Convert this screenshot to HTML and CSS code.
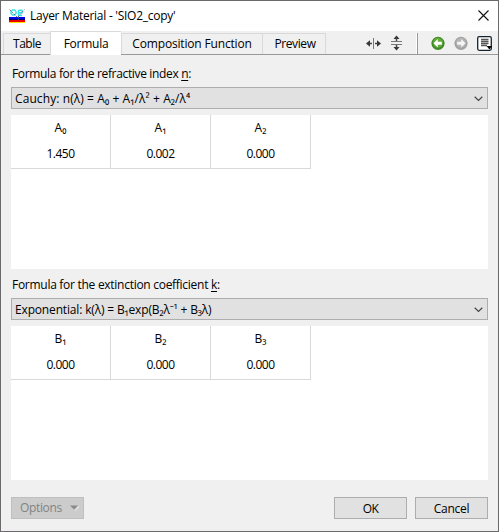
FILE: index.html
```html
<!DOCTYPE html>
<html lang="en">
<head>
<meta charset="utf-8">
<title>Layer Material</title>
<link rel="stylesheet" href="styles.css">
</head>
<body>
<div class="window">
  <header class="titlebar">
    <svg class="logo" width="16" height="16" viewBox="0 0 16 16" shape-rendering="crispEdges">
      <path d="M0 8h16v2H0z" fill="#0000e8"/><path d="M0 10h16v1H0z" fill="#000070"/><path d="M0 11h16v2H0z" fill="#e80000"/><path d="M0 13h16v1H0z" fill="#ffe000"/>
      <g fill="none" shape-rendering="auto"><path d="M3.500 1h2L7 2.500v2L5.500 6h-2L2 4.500v-2zM9.500 1v5.500H13M9.500 1.200H13v2.600H9.500" stroke="#35e4ee" stroke-width="1.400"/><path d="M.5.5l8 8 7-8M9.500 7v4" stroke="#506070" stroke-width=".8" stroke-dasharray="2 1"/></g>
    </svg>
    <h1 class="title"><span class="t-title">Layer Material - 'SIO2_copy'</span></h1>
    <svg class="close" width="11" height="11" viewBox="0 0 11 11"><path d="M.5.5l10 10M10.500.5l-10 10" stroke="#111" stroke-width="1.100"/></svg>
  </header>
  <nav class="bar">
    <div class="tabs">
      <div class="tab tab-table"><span class="t-table">Table</span></div>
      <div class="tab tab-formula active"><span class="t-formula">Formula</span></div>
      <div class="tab tab-comp"><span class="t-comp">Composition Function</span></div>
      <div class="tab tab-preview"><span class="t-preview">Preview</span></div>
    </div>
    <div class="tools">
      <svg class="tools-icons" width="132" height="22" viewBox="366 33 132 22">
        <g fill="#333"><path d="M366 43.500l4-3.200v6.400zM381 43.500l-4-3.200v6.400zM396.500 35.500l3 3.500h-6zM396.500 50.500l3-3.500h-6z"/></g>
        <g fill="none"><path d="M369 43.500h3M375 43.500h3M396.500 38v3M396.500 45v3" stroke="#444" stroke-width="1.500"/><path d="M373.500 38v11M391 41.500h11M391 44.500h11" stroke="#777"/></g>
        <path d="M416.500 32v22" stroke="#fff"/><path d="M417.500 33v21" stroke="#999"/>
        <circle cx="438" cy="43.300" r="6.600" fill="#3f8a25"/><circle cx="438" cy="42.800" r="5" fill="#62aa3c"/>
        <path d="M433.500 43.300l4.300-4.300v2.800h4v3h-4v2.800z" fill="#fff"/>
        <circle cx="461" cy="43.300" r="6.600" fill="#a2a2a2"/><circle cx="461" cy="42.800" r="5" fill="#b4b4b4"/>
        <path d="M465.500 43.300l-4.300-4.300v2.800h-4v3h4v2.800z" fill="#f5f5f5"/>
        <rect x="477.700" y="36.700" width="13.600" height="13.600" rx="1.500" fill="#fff" stroke="#15232e" stroke-width="1.300"/>
        <path d="M481 39.500h7.500M481 41.500h7.500M481 43.500h7.500M481 45.500h6" stroke="#555" stroke-width="1.400"/>
        <path d="M486.500 46h5.500l-2.500 3.500z" fill="#000"/>
      </svg>
    </div>
  </nav>
  <main class="content">
    <label class="label label-n"><span class="t-n">Formula for the refractive index <u>n</u>:</span></label>
    <div class="select"><span class="t-cauchy">Cauchy: n(λ) = A₀ + A₁/λ² + A₂/λ⁴</span>
      <svg class="chevron" width="9" height="6" viewBox="0 0 9 6"><path d="M.7.8l3.800 3.700L8.300.8" fill="none" stroke="#444" stroke-width="1.200"/></svg></div>
    <section class="sheet">
      <div class="grid">
        <div class="col"><div class="head">A₀</div><div class="val">1.450</div></div>
        <div class="col"><div class="head">A₁</div><div class="val">0.002</div></div>
        <div class="col"><div class="head">A₂</div><div class="val">0.000</div></div>
      </div>
    </section>
    <label class="label label-k"><span class="t-k">Formula for the extinction coefficient <u>k</u>:</span></label>
    <div class="select"><span class="t-exp">Exponential: k(λ) = B₁exp(B₂λ⁻¹ + B₃λ)</span>
      <svg class="chevron" width="9" height="6" viewBox="0 0 9 6"><path d="M.7.8l3.800 3.700L8.300.8" fill="none" stroke="#444" stroke-width="1.200"/></svg></div>
    <section class="sheet">
      <div class="grid">
        <div class="col"><div class="head">B₁</div><div class="val">0.000</div></div>
        <div class="col"><div class="head">B₂</div><div class="val">0.000</div></div>
        <div class="col"><div class="head">B₃</div><div class="val">0.000</div></div>
      </div>
    </section>
    <footer class="footer">
      <div class="btn options"><span class="t-options">Options</span><svg width="9" height="6" viewBox="0 0 9 6"><path d="M4.500 6L9 1v1L5.500 5.500z" fill="#fff"/><path d="M0 .5h8L4 4.500z" fill="#8a8a8a"/></svg></div>
      <div class="btn ok"><span class="t-ok">OK</span></div>
      <div class="btn cancel"><span class="t-cancel">Cancel</span></div>
    </footer>
  </main>
</div>
</body>
</html>
```
FILE: styles.css
```css
* { box-sizing: border-box; }
body { margin: 0; font: 12px/16px "Open Sans", "Noto Sans", sans-serif; color: #000; }
.window { width: 499px; height: 532px; background: #f0f0f0; border: 1px solid #6b696b; display: flex; flex-direction: column; overflow: hidden; }
span { white-space: nowrap; }
.t-title { letter-spacing: -.27px; }
.t-table { letter-spacing: -.5px; }
.t-formula { letter-spacing: -.25px; }
.t-comp { letter-spacing: -.17px; }
.t-preview { letter-spacing: -.4px; }
.t-n { letter-spacing: -.34px; }
.t-k { letter-spacing: -.28px; }
.t-cauchy { letter-spacing: .09px; }
.t-exp { letter-spacing: -.16px; }
.t-options { letter-spacing: -.35px; }
.t-ok { letter-spacing: -.5px; }
.t-cancel { letter-spacing: -.3px; }
.titlebar { height: 30px; flex: none; background: #fff; display: flex; align-items: center; padding: 0 10px 0 8px; }
.logo { margin-right: 5px; margin-top: 2px; }
.title { margin: 0; font-size: 12px; font-weight: 400; flex: 1; }
.close { margin-bottom: 1px; margin-right: -1px; }
.bar { height: 24px; flex: none; display: flex; border-bottom: 1px solid #999; padding-left: 2px; }
.tabs { display: flex; align-items: flex-end; flex: 1; }
.tab { height: 21px; border: 1px solid #d9d9d9; border-bottom: 0; border-right: 0; display: flex; justify-content: center; align-items: center; }
.tab-table { width: 47px; }
.tab-formula { width: 71px; }
.tab-comp { width: 141px; }
.tab-preview { width: 64px; border-right: 1px solid #d9d9d9; padding-left: 2px; }
.active { height: 24px; background: #fff; margin-bottom: -1px; }
.tools { padding-top: 2px; height: 23px; overflow: hidden; }
.tools svg { display: block; }
.content { padding: 11px 10px 0 10px; display: flex; flex-direction: column; }
.label { height: 21px; padding-left: 1px; }
.label-k { margin-top: 8px; }
u { text-underline-offset: 2px; }
.select { height: 22px; background: #e1e1e1; border: 1px solid #adadad; display: flex; align-items: center; justify-content: space-between; padding: 1px 4px 0 3px; }
.sheet { height: 154px; margin-top: 6px; background: #fff; }
.grid { display: flex; }
.col { width: 100px; height: 54px; border-right: 1px solid #d9d9d9; border-bottom: 1px solid #d9d9d9; text-align: center; }
.head { height: 26px; line-height: 26px; }
.val { height: 27px; line-height: 25px; letter-spacing: -.5px; }
.footer { display: flex; margin-top: 17px; }
.btn { width: 73px; height: 22px; background: #e1e1e1; border: 1px solid #adadad; display: flex; align-items: center; justify-content: center; padding-top: 1px; }
.options { background: #ccc; border-color: #bfbfbf; color: #838383; margin-right: auto; justify-content: space-between; padding: 0 4px 0 8px; }
.cancel { margin-left: 8px; }
```
